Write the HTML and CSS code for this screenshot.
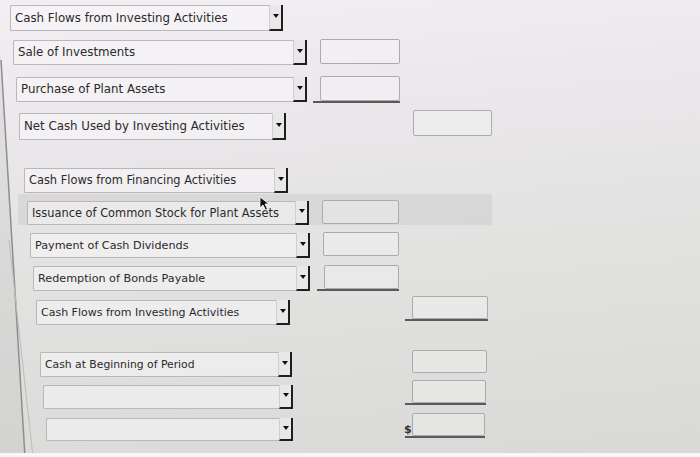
FILE: index.html
```html
<!DOCTYPE html>
<html>
<head>
<meta charset="utf-8">
<link rel="stylesheet" href="styles.css">
</head>
<body>
<div class="page">
  <div class="band"></div>
  <div class="rows">
    <div class="row r1"><div class="sel"><span class="lbl">Cash Flows from Investing Activities</span><span class="btn"></span></div></div>
    <div class="row r2"><div class="sel"><span class="lbl">Sale of Investments</span><span class="btn"></span></div><div class="amt"><div class="box"></div></div></div>
    <div class="row r3"><div class="sel"><span class="lbl">Purchase of Plant Assets</span><span class="btn"></span></div><div class="amt under"><div class="box"></div></div></div>
    <div class="row r4"><div class="sel"><span class="lbl">Net Cash Used by Investing Activities</span><span class="btn"></span></div><div class="amt"><div class="box"></div></div></div>
    <div class="row r5"><div class="sel"><span class="lbl">Cash Flows from Financing Activities</span><span class="btn"></span></div></div>
    <div class="row r6"><div class="sel"><span class="lbl">Issuance of Common Stock for Plant Assets</span><span class="btn"></span></div><div class="amt"><div class="box"></div></div></div>
    <div class="row r7"><div class="sel"><span class="lbl">Payment of Cash Dividends</span><span class="btn"></span></div><div class="amt"><div class="box"></div></div></div>
    <div class="row r8"><div class="sel"><span class="lbl">Redemption of Bonds Payable</span><span class="btn"></span></div><div class="amt under"><div class="box"></div></div></div>
    <div class="row r9"><div class="sel"><span class="lbl">Cash Flows from Investing Activities</span><span class="btn"></span></div><div class="amt under"><div class="box"></div></div></div>
    <div class="row r10"><div class="sel"><span class="lbl">Cash at Beginning of Period</span><span class="btn"></span></div><div class="amt"><div class="box"></div></div></div>
    <div class="row r11"><div class="sel"><span class="lbl"></span><span class="btn"></span></div><div class="amt under"><div class="box"></div></div></div>
    <div class="row r12"><div class="sel"><span class="lbl"></span><span class="btn"></span></div><div class="amt under dollar"><span class="cur">$</span><div class="box"></div></div></div>
  </div>
  <svg class="frame" width="700" height="457" viewBox="0 0 700 457">
    <path d="M0 50 L0 457 L25 457 L1 60 Z" fill="rgba(150,150,150,0.12)"/>
    <path d="M1 60 L25 457" stroke="#8e8e8e" stroke-width="1.5" fill="none"/>
    <path d="M9 240 L33 457" stroke="#bcbcbc" stroke-width="1" fill="none"/>
  </svg>
  <svg class="cursor" width="14" height="16" viewBox="0 0 14 16">
    <path d="M1 1 L1 12 L4 9 L6.5 14 L8.5 13 L6 8 L10 8 Z" fill="#111" stroke="#fff" stroke-width="0.8"/>
  </svg>
  <div class="foot"></div>
</div>
</body>
</html>
```

FILE: styles.css
```css
html, body {
  margin: 0;
  padding: 0;
}
body {
  width: 700px;
  height: 457px;
  overflow: hidden;
  font-family: "DejaVu Sans", Verdana, sans-serif;
  color: #2a2a2a;
}
.page {
  position: relative;
  width: 700px;
  height: 457px;
  overflow: hidden;
  background: linear-gradient(175deg, #f2eef2 0%, #ebe8eb 25%, #e2e2e1 55%, #d9d9d7 100%);
}
.band {
  position: absolute;
  left: 18px;
  top: 194px;
  width: 474px;
  height: 31px;
  background: rgba(180, 180, 180, 0.25);
}
.rows {
  position: relative;
  display: flex;
  flex-direction: column;
}
.row {
  display: flex;
  align-items: flex-start;
}
.sel {
  display: flex;
  align-items: stretch;
  box-sizing: border-box;
  height: 100%;
  border: 1px solid #b9b7b9;
  border-right: none;
  border-radius: 2px 0 0 2px;
  background: rgba(250, 248, 250, 0.55);
}
.lbl {
  flex: 1;
  display: flex;
  align-items: center;
  padding-left: 4px;
  padding-bottom: 1px;
  white-space: nowrap;
  overflow: hidden;
}
.btn {
  position: relative;
  width: 14px;
  box-sizing: border-box;
  border-left: 1px solid #cfcdcf;
  border-right: 2px solid #1e1e1e;
  border-bottom: 2px solid #1e1e1e;
  background: #e9e7e9;
  margin: -1px 0 -1px 0;
}
.btn::after {
  content: "";
  position: absolute;
  left: 3px;
  top: 50%;
  margin-top: -3px;
  border-left: 3px solid transparent;
  border-right: 3px solid transparent;
  border-top: 4px solid #111;
}
.amt {
  display: flex;
  align-items: flex-end;
  box-sizing: border-box;
  margin-top: -1px;
}
.amt.under {
  border-bottom: 2px solid #5a5a5a;
  padding-left: 7px;
}
.box {
  box-sizing: border-box;
  border: 1px solid #acaaac;
  border-radius: 2px;
  background: rgba(250, 248, 250, 0.35);
}
.cur {
  position: absolute;
  margin-left: -8px;
  font-size: 11px;
  font-weight: bold;
  color: #333;
  line-height: 12px;
}
.dollar {
  position: relative;
}
.frame {
  position: absolute;
  left: 0;
  top: 0;
  pointer-events: none;
}
.cursor {
  position: absolute;
  left: 259px;
  top: 196px;
}
.foot {
  position: absolute;
  left: 0;
  top: 453px;
  width: 700px;
  height: 4px;
  background: #f7f7f7;
}

/* per-row geometry (photo perspective) */
.r1 { margin-top: 5px; height: 26px; padding-left: 10px; font-size: 11.8px; }
.r1 .sel { width: 273px; }

.r2 { margin-top: 9px; height: 25px; padding-left: 13px; font-size: 11.8px; }
.r2 .sel { width: 294px; }
.r2 .amt { margin-left: 13px; }
.r2 .box { width: 80px; height: 25px; }

.r3 { margin-top: 12px; height: 25px; padding-left: 16px; font-size: 11.8px; }
.r3 .sel { width: 291px; }
.r3 .amt { margin-left: 6px; }
.r3 .box { width: 80px; height: 25px; }

.r4 { margin-top: 11px; height: 27px; padding-left: 19px; font-size: 11.8px; }
.r4 .sel { width: 267px; }
.r4 .amt { margin-left: 127px; margin-top: -3px; }
.r4 .box { width: 79px; height: 26px; }

.r5 { margin-top: 28px; height: 25px; padding-left: 24px; font-size: 11.4px; }
.r5 .sel { width: 264px; }

.r6 { margin-top: 8px; height: 24px; padding-left: 27px; font-size: 11.4px; }
.r6 .sel { width: 282px; }
.r6 .amt { margin-left: 13px; }
.r6 .box { width: 77px; height: 24px; }

.r7 { margin-top: 8px; height: 25px; padding-left: 30px; font-size: 11.2px; }
.r7 .sel { width: 280px; }
.r7 .amt { margin-left: 13px; }
.r7 .box { width: 76px; height: 24px; }

.r8 { margin-top: 8px; height: 25px; padding-left: 33px; font-size: 11.2px; }
.r8 .sel { width: 277px; }
.r8 .amt { margin-left: 7px; }
.r8 .box { width: 75px; height: 24px; }

.r9 { margin-top: 9px; height: 25px; padding-left: 36px; font-size: 11px; }
.r9 .sel { width: 254px; }
.r9 .amt { margin-left: 115px; margin-top: -4px; }
.r9 .box { width: 76px; height: 23px; }

.r10 { margin-top: 27px; height: 25px; padding-left: 40px; font-size: 10.8px; }
.r10 .sel { width: 252px; }
.r10 .amt { margin-left: 120px; margin-top: -2px; }
.r10 .box { width: 75px; height: 23px; }

.r11 { margin-top: 8px; height: 24px; padding-left: 43px; font-size: 10.8px; }
.r11 .sel { width: 250px; }
.r11 .amt { margin-left: 112px; margin-top: -5px; }
.r11 .box { width: 74px; height: 23px; }

.r12 { margin-top: 9px; height: 23px; padding-left: 46px; font-size: 10.8px; }
.r12 .sel { width: 247px; }
.r12 .amt { margin-left: 112px; margin-top: -5px; }
.r12 .box { width: 73px; height: 23px; }
```
